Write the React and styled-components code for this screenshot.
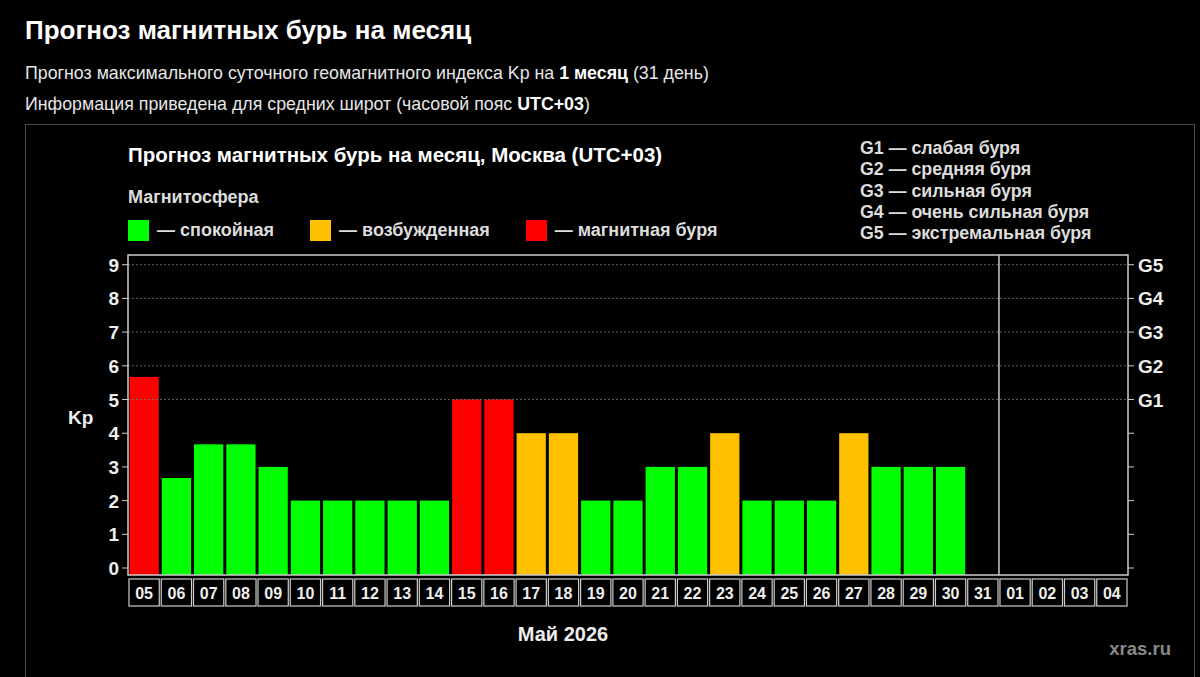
import React from "react";
import styled, {createGlobalStyle} from "styled-components";

const Global = createGlobalStyle`
  body { margin: 0; background: #000; font-family: "Liberation Sans", Arial, sans-serif; color: #fff; overflow: hidden; }
`;

const Page = styled.div`
  width: 1200px;
  height: 677px;
  overflow: hidden;
  padding: 15px 0 0 25px;
  box-sizing: border-box;
`;

const H1 = styled.h1`
  margin: 0 0 17px;
  font-size: 26px;
  line-height: 30px;
  font-weight: bold;
`;

const Sub = styled.p`
  margin: 0 0 9px;
  font-size: 17.8px;
  line-height: 22px;
  color: #e6e6e6;
  b { color: #fff; }
`;

const Panel = styled.div`
  margin-top: 8px;
  width: 1168px;
  height: 560px;
  border: 1px solid #4a4a4a;
  border-bottom: none;
`;

const Head = styled.div`
  height: 126px;
  display: flex;
  padding: 18px 0 0 102px;
  box-sizing: border-box;
  font-weight: bold;
`;

const LeftHead = styled.div`
  width: 732px;
`;

const ChartTitle = styled.div`
  font-size: 20.5px;
  line-height: 24px;
  margin-bottom: 20px;
`;

const Sphere = styled.div`
  font-size: 18px;
  line-height: 20px;
  color: #ddd;
  margin-bottom: 12px;
`;

const Legend = styled.div`
  display: flex;
  gap: 36px;
  height: 22px;
  font-size: 18px;
  color: #ddd;
`;

const LegendItem = styled.div`
  display: flex;
  align-items: center;
  gap: 8px;
`;

const Swatch = styled.span`
  width: 21px;
  height: 21px;
  background: ${p => p.color};
`;

const GList = styled.div`
  font-size: 17.8px;
  line-height: 21.3px;
  margin-top: -5px;
  color: #ddd;
`;

const COLORS = {g: "#00ff00", o: "#ffc000", r: "#ff0000"};
const data = [
  [5.67, "r"], [2.67, "g"], [3.67, "g"], [3.67, "g"], [3, "g"], [2, "g"], [2, "g"], [2, "g"], [2, "g"], [2, "g"],
  [5, "r"], [5, "r"], [4, "o"], [4, "o"], [2, "g"], [2, "g"], [3, "g"], [3, "g"], [4, "o"], [2, "g"], [2, "g"], [2, "g"],
  [4, "o"], [3, "g"], [3, "g"], [3, "g"], null,
];
const days = ["05","06","07","08","09","10","11","12","13","14","15","16","17","18","19","20","21","22","23","24","25","26","27","28","29","30","31","01","02","03","04"];

const X0 = 102, X1 = 1102, YT = 4, YB = 324;
const W = (X1 - X0) / 31;
const y = v => 317 - 33.7 * v;

const Chart = () => (
  <svg width="1168" height="420" style={{display: "block"}} fontFamily="Liberation Sans, Arial, sans-serif" fontWeight="bold">
    {data.map((d, i) => d && (
      <rect key={i} x={X0 + i * W + 1.5} y={y(d[0])} width={W - 3} height={YB - y(d[0])} fill={COLORS[d[1]]}/>
    ))}
    {[5, 6, 7, 8, 9].map(v => (
      <line key={v} x1={X0} x2={X1} y1={y(v)} y2={y(v)} stroke="#777" strokeDasharray="2 2" strokeWidth="0.8"/>
    ))}
    <rect x={X0} y={YT} width={X1 - X0} height={YB - YT} fill="none" stroke="#ccc" strokeWidth="1.5"/>
    <line x1={X0 + 27 * W} x2={X0 + 27 * W} y1={YT} y2={YB} stroke="#ccc" strokeWidth="1.5"/>
    {[0,1,2,3,4,5,6,7,8,9].map(v => (
      <g key={v}>
        <line x1={X0 - 6} x2={X0} y1={y(v)} y2={y(v)} stroke="#ccc"/>
        <line x1={X1} x2={X1 + 6} y1={y(v)} y2={y(v)} stroke="#ccc"/>
        <text x={X0 - 9} y={y(v) + 7} fill="#eee" fontSize="19" textAnchor="end">{v}</text>
        {v >= 5 && <text x={X1 + 10} y={y(v) + 7} fill="#eee" fontSize="19">G{v - 4}</text>}
      </g>
    ))}
    <text x={42} y={173} fill="#eee" fontSize="19">Kp</text>
    {days.map((d, i) => (
      <g key={d + i}>
        <rect x={X0 + i * W + 1} y={YB + 4} width={W - 2} height={27} fill="none" stroke="#ccc" strokeWidth="1.2"/>
        <text x={X0 + i * W + W / 2} y={YB + 24} fill="#eee" fontSize="16" textAnchor="middle">{d}</text>
      </g>
    ))}
    <text x={537} y={390} fill="#eee" fontSize="20" textAnchor="middle">Май 2026</text>
    <text x={1145} y={404} fill="#888" fontSize="18.5" textAnchor="end">xras.ru</text>
  </svg>
);

const App = () => (
  <Page>
    <Global/>
    <H1>Прогноз магнитных бурь на месяц</H1>
    <Sub>Прогноз максимального суточного геомагнитного индекса Kp на <b>1 месяц</b> (31 день)</Sub>
    <Sub>Информация приведена для средних широт (часовой пояс <b>UTC+03</b>)</Sub>
    <Panel>
      <Head>
        <LeftHead>
          <ChartTitle>Прогноз магнитных бурь на месяц, Москва (UTC+03)</ChartTitle>
          <Sphere>Магнитосфера</Sphere>
          <Legend>
            <LegendItem><Swatch color="#00ff00"/>— спокойная</LegendItem>
            <LegendItem><Swatch color="#ffc000"/>— возбужденная</LegendItem>
            <LegendItem><Swatch color="#ff0000"/>— магнитная буря</LegendItem>
          </Legend>
        </LeftHead>
        <GList>
          <div>G1 — слабая буря</div>
          <div>G2 — средняя буря</div>
          <div>G3 — сильная буря</div>
          <div>G4 — очень сильная буря</div>
          <div>G5 — экстремальная буря</div>
        </GList>
      </Head>
      <Chart/>
    </Panel>
  </Page>
);

export default App;
